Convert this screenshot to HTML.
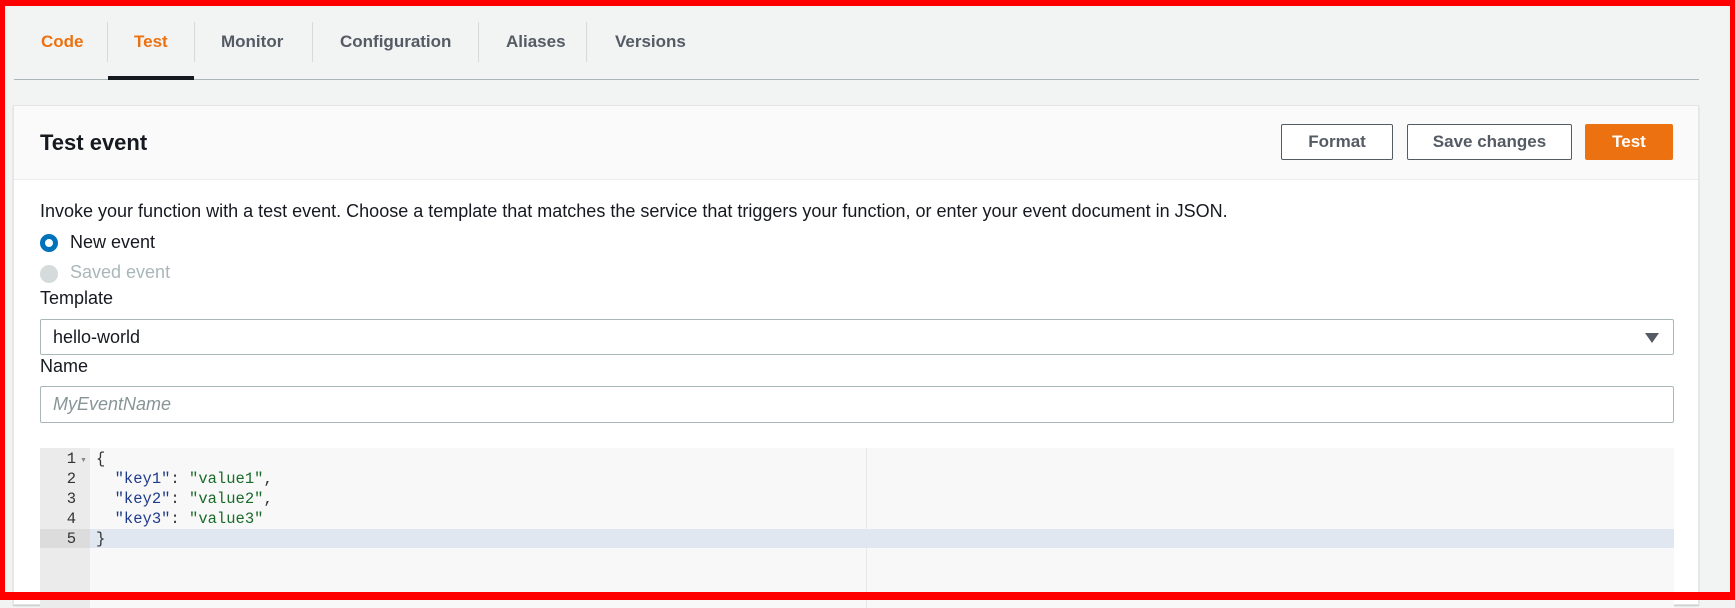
<!DOCTYPE html>
<html><head><meta charset="utf-8"><style>
*{box-sizing:border-box;margin:0;padding:0}
body{width:1735px;height:600px;overflow:hidden;background:#f2f3f3;font-family:"Liberation Sans",Arial,sans-serif;position:relative;color:#16191f}
.frame{position:absolute;left:0;top:0;width:1735px;height:600px;border:solid #f00;border-width:6px 5px 8px 5px;z-index:10;pointer-events:none}
.abs{position:absolute}
.tab{position:absolute;top:32px;font-size:17px;font-weight:bold;color:#545b64}
.sep{position:absolute;top:22px;width:1px;height:40px;background:#d5dbdb}
.panel{position:absolute;left:13px;top:105px;width:1686px;height:500px;background:#fff;border:1px solid #e4e6e6;box-shadow:0 1px 1px rgba(0,28,36,.2)}
.hdr{position:absolute;left:0;top:0;width:100%;height:74px;background:#fafafa;border-bottom:1px solid #eaeded}
.btn{position:absolute;top:18px;height:36px;border:1px solid #545b64;border-radius:2px;background:#fff;font-weight:bold;font-size:17px;color:#545b64;text-align:center;line-height:34px}
.t{position:absolute;font-size:18px;color:#16191f}
.box{position:absolute;left:26px;width:1634px;border:1px solid #aab7b8;border-radius:2px;background:#fff}
.code{font-family:"Liberation Mono",monospace;font-size:15.5px;position:absolute;line-height:20px}
</style></head><body>
<div class="frame"></div>
<div class="tab" style="left:41px;color:#ec7211">Code</div>
<div class="sep" style="left:107px"></div>
<div class="tab" style="left:134px;color:#ec7211">Test</div>
<div class="sep" style="left:194px"></div>
<div class="tab" style="left:221px">Monitor</div>
<div class="sep" style="left:312px"></div>
<div class="tab" style="left:340px">Configuration</div>
<div class="sep" style="left:478px"></div>
<div class="tab" style="left:506px">Aliases</div>
<div class="sep" style="left:586px"></div>
<div class="tab" style="left:615px">Versions</div>
<div class="abs" style="left:14px;top:79px;width:1685px;height:1px;background:#aab7b8"></div>
<div class="abs" style="left:108px;top:76px;width:86px;height:4px;background:#16191f"></div>

<div class="panel">
 <div class="hdr">
  <div class="abs" style="left:26px;top:24px;font-size:22px;font-weight:bold">Test event</div>
  <div class="btn" style="left:1267px;width:112px">Format</div>
  <div class="btn" style="left:1393px;width:165px">Save changes</div>
  <div class="btn" style="left:1571px;width:88px;background:#ec7211;border-color:#ec7211;color:#fff">Test</div>
 </div>
 <div class="t" style="left:26px;top:95px">Invoke your function with a test event. Choose a template that matches the service that triggers your function, or enter your event document in JSON.</div>
 <div class="abs" style="left:26px;top:128px;width:18px;height:18px;border-radius:50%;border:5px solid #0073bb;background:#fff"></div>
 <div class="t" style="left:56px;top:126px">New event</div>
 <div class="abs" style="left:26px;top:159px;width:18px;height:18px;border-radius:50%;background:#d5dbdb"></div>
 <div class="t" style="left:56px;top:156px;color:#aab7b8">Saved event</div>
 <div class="t" style="left:26px;top:182px">Template</div>
 <div class="box" style="top:213px;height:36px"><div class="t" style="left:12px;top:7px">hello-world</div>
  <div class="abs" style="right:14px;top:13px;width:0;height:0;border-left:7px solid transparent;border-right:7px solid transparent;border-top:10px solid #545b64"></div></div>
 <div class="t" style="left:26px;top:250px">Name</div>
 <div class="box" style="top:280px;height:37px"><div class="t" style="left:12px;top:7px;color:#879596;font-style:italic">MyEventName</div></div>
 <div class="abs" style="left:26px;top:342px;width:1634px;height:160px;background:#f8f8f8"></div>
 <div class="abs" style="left:26px;top:342px;width:50px;height:160px;background:#ebebeb"></div>
 <div class="abs" style="left:852px;top:342px;width:1px;height:160px;background:#e8e8e8"></div>
 <div class="abs" style="left:26px;top:423px;width:1634px;height:19px;background:#e0e7f0"></div>
 <div class="abs" style="left:26px;top:423px;width:50px;height:19px;background:#dcdcdc"></div>
 <div class="code" style="left:26px;top:343px;width:36px;text-align:right;color:#333">1<br>2<br>3<br>4<br>5</div>
 <div class="abs" style="left:66px;top:351px;font-size:7px;color:#888">▼</div>
 <div class="code" style="left:82px;top:343px;color:#333;white-space:pre">{
  <span style="color:#1e3a8a">"key1"</span>: <span style="color:#1a6b2a">"value1"</span>,
  <span style="color:#1e3a8a">"key2"</span>: <span style="color:#1a6b2a">"value2"</span>,
  <span style="color:#1e3a8a">"key3"</span>: <span style="color:#1a6b2a">"value3"</span>
}</div>
</div>
</body></html>
